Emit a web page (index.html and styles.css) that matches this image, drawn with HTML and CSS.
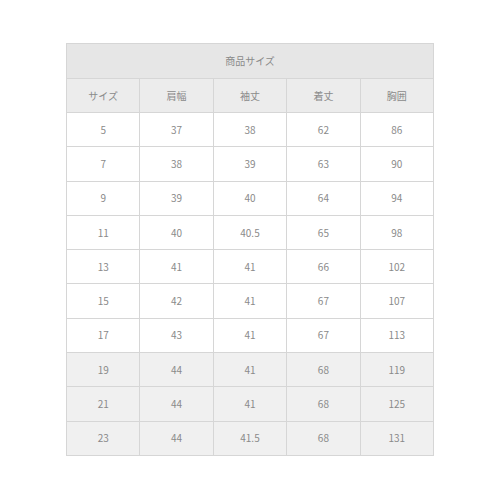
FILE: index.html
```html
<!DOCTYPE html>
<html lang="ja">
<head>
<meta charset="utf-8">
<link rel="stylesheet" href="styles.css">
</head>
<body>
<div class="page">
  <div class="size-table">
    <div class="cell title">商品サイズ</div>
    <div class="cell head">サイズ</div>
    <div class="cell head">肩幅</div>
    <div class="cell head">袖丈</div>
    <div class="cell head">着丈</div>
    <div class="cell head">胸囲</div>

    <div class="cell">5</div><div class="cell">37</div><div class="cell">38</div><div class="cell">62</div><div class="cell">86</div>
    <div class="cell">7</div><div class="cell">38</div><div class="cell">39</div><div class="cell">63</div><div class="cell">90</div>
    <div class="cell">9</div><div class="cell">39</div><div class="cell">40</div><div class="cell">64</div><div class="cell">94</div>
    <div class="cell">11</div><div class="cell">40</div><div class="cell">40.5</div><div class="cell">65</div><div class="cell">98</div>
    <div class="cell">13</div><div class="cell">41</div><div class="cell">41</div><div class="cell">66</div><div class="cell">102</div>
    <div class="cell">15</div><div class="cell">42</div><div class="cell">41</div><div class="cell">67</div><div class="cell">107</div>
    <div class="cell">17</div><div class="cell">43</div><div class="cell">41</div><div class="cell">67</div><div class="cell">113</div>
    <div class="cell shade">19</div><div class="cell shade">44</div><div class="cell shade">41</div><div class="cell shade">68</div><div class="cell shade">119</div>
    <div class="cell shade">21</div><div class="cell shade">44</div><div class="cell shade">41</div><div class="cell shade">68</div><div class="cell shade">125</div>
    <div class="cell shade">23</div><div class="cell shade">44</div><div class="cell shade">41.5</div><div class="cell shade">68</div><div class="cell shade">131</div>
  </div>
</div>
</body>
</html>
```
FILE: styles.css
```css
html, body {
  margin: 0;
  padding: 0;
  background: #ffffff;
}

.page {
  padding: 43px 0 0 66px;
}

.size-table {
  width: 368px;
  display: grid;
  grid-template-columns: repeat(5, 1fr);
  grid-template-rows: 34px 33px repeat(10, 33.3px);
  gap: 1px;
  padding: 1px;
  box-sizing: border-box;
  background: #d6d6d6;
  font-family: "Noto Sans CJK JP", "Noto Sans", sans-serif;
  font-size: 10px;
  color: #8a8a8a;
}

.cell {
  background: #ffffff;
  display: flex;
  align-items: center;
  justify-content: center;
  line-height: 1;
}

.title {
  grid-column: 1 / -1;
  background: #e6e6e6;
}

.head {
  background: #ececec;
}

.shade {
  background: #f0f0f0;
}
```
